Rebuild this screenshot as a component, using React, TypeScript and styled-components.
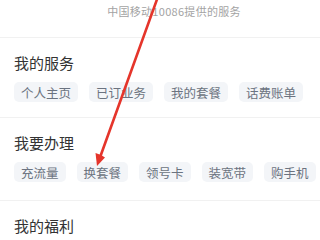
import React from "react";
import styled, { createGlobalStyle } from "styled-components";

const GlobalStyle = createGlobalStyle`
  html, body {
    margin: 0;
    padding: 0;
    background: #ffffff;
    font-family: "Noto Sans CJK SC", "Noto Sans", sans-serif;
  }
`;

const Page = styled.div`
  position: relative;
  width: 320px;
  height: 240px;
  overflow: hidden;
  background: #ffffff;
`;

const Header = styled.div`
  height: 38px;
  display: flex;
  align-items: flex-start;
  justify-content: center;
  padding-left: 28px;
  box-sizing: border-box;
  border-bottom: 1px solid #f1f1f1;
`;

const Provider = styled.span`
  margin-top: 3px;
  font-size: 11px;
  line-height: 16px;
  color: #a3a3a3;
  letter-spacing: 0.3px;
`;

const Section = styled.div<{ $bottom: number }>`
  padding: 15px 0 ${(p) => p.$bottom}px 14px;
  border-bottom: 1px solid #f1f1f1;
`;

const Title = styled.div`
  font-size: 15px;
  line-height: 20px;
  color: #333333;
`;

const ChipRow = styled.div`
  display: flex;
  gap: 11px;
  margin-top: 9px;
`;

const Chip = styled.span`
  height: 20px;
  padding: 0 7px;
  display: flex;
  align-items: center;
  border-radius: 5px;
  background: #f3f5f8;
  color: #6b7380;
  font-size: 12.5px;
  white-space: nowrap;
`;

const Arrow = styled.svg`
  position: absolute;
  left: 0;
  top: 0;
  pointer-events: none;
`;

const services = ["个人主页", "已订业务", "我的套餐", "话费账单"];
const todo = ["充流量", "换套餐", "领号卡", "装宽带", "购手机"];

export default function App() {
  return (
    <Page>
      <GlobalStyle />
      <Header>
        <Provider>中国移动10086提供的服务</Provider>
      </Header>
      <Section $bottom={15}>
        <Title>我的服务</Title>
        <ChipRow>
          {services.map((s) => (
            <Chip key={s}>{s}</Chip>
          ))}
        </ChipRow>
      </Section>
      <Section $bottom={18}>
        <Title>我要办理</Title>
        <ChipRow>
          {todo.map((s) => (
            <Chip key={s}>{s}</Chip>
          ))}
        </ChipRow>
      </Section>
      <Section $bottom={15}>
        <Title>我的福利</Title>
      </Section>
      <Arrow width="320" height="240" viewBox="0 0 320 240">
        <line x1="157.5" y1="-2" x2="100.5" y2="156" stroke="#e5352b" strokeWidth="2.6" strokeLinecap="round" />
        <path d="M97 166 L95.5 153 L101 155 L105 157.5 Z" fill="#e5352b" />
      </Arrow>
    </Page>
  );
}
